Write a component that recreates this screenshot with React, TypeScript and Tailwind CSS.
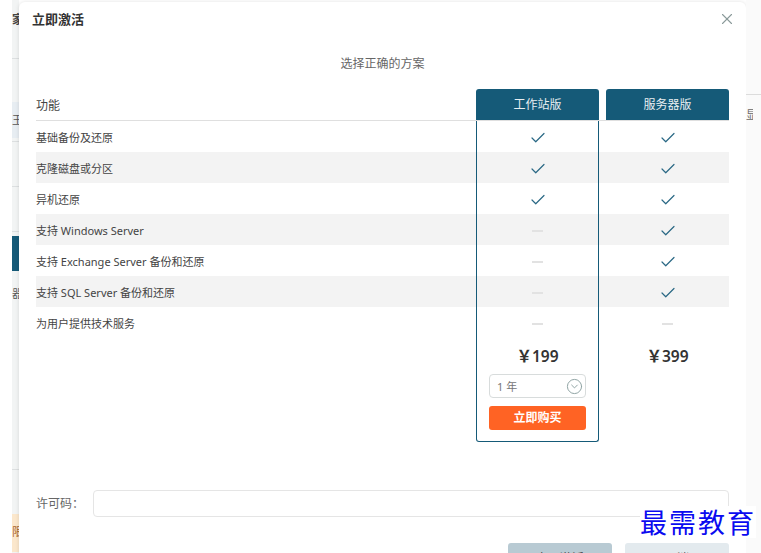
import { Check, CircleChevronDown, X } from 'lucide-react';

const features = [
  { name: '基础备份及还原', a: true, b: true },
  { name: '克隆磁盘或分区', a: true, b: true },
  { name: '异机还原', a: true, b: true },
  { name: '支持 Windows Server', a: false, b: true },
  { name: '支持 Exchange Server 备份和还原', a: false, b: true },
  { name: '支持 SQL Server 备份和还原', a: false, b: true },
  { name: '为用户提供技术服务', a: false, b: false },
];

function Mark({ on }: { on: boolean }) {
  if (on) return <Check size={18} strokeWidth={1.6} className="text-[#2a6885]" />;
  return <div className="h-[2px] w-[11px] bg-[#e2e2e2]" />;
}

export default function App() {
  return (
    <div
      className="relative flex h-[553px] w-[761px] overflow-hidden bg-white text-[#333]"
      style={{ fontFamily: '"Noto Sans", "Noto Sans CJK SC", sans-serif' }}
    >
      {/* page behind the dialog, left side */}
      <div className="w-3 shrink-0 bg-white" />
      <div className="flex h-full w-[7px] shrink-0 flex-col overflow-hidden bg-[#f2f4f4] text-[11px] leading-none">
        <div className="h-[59px] whitespace-nowrap border-b border-[#dcdfe0] pt-3 text-xs font-bold text-[#444]">家</div>
        <div className="mt-[43px] h-[36px] whitespace-nowrap bg-[#e7edf2] pt-3 text-[#555]">王</div>
        <div className="mt-[3px] h-px bg-[#dcdfe0]" />
        <div className="mt-[44px] h-px bg-[#dcdfe0]" />
        <div className="mt-[44px] h-px bg-[#dcdfe0]" />
        <div className="mt-1 h-[35px] bg-[#155a78]" />
        <div className="mt-[17px] whitespace-nowrap text-[#555]">器</div>
        <div className="mt-[170px] h-px bg-[#dcdfe0]" />
        <div className="mt-[44px] h-[38px] whitespace-nowrap bg-[#fbe7cc] pt-3 text-[#a8652a]">限</div>
      </div>

      {/* dialog */}
      <div className="mt-0.5 flex h-[600px] w-[727px] shrink-0 flex-col rounded-t-md bg-white pl-[17px] pr-[17px] shadow-[0_0_4px_rgba(0,0,0,0.12)]">
        <div className="flex h-[34px] items-center justify-between">
          <div className="-ml-1 text-[13px] font-bold leading-none text-[#333]">立即激活</div>
          <X size={18} strokeWidth={1.5} className="-mr-[7px] text-[#8b9a9a]" />
        </div>
        <div className="mt-[21px] text-center text-xs leading-[14px] text-[#666]">选择正确的方案</div>

        <div className="mt-[18px] flex h-[32px] gap-[7px] border-b border-[#dfdfdf]">
          <div className="flex flex-1 items-center pt-0.5 text-xs leading-none text-[#444]">功能</div>
          <div className="flex h-[31px] w-[123px] items-center justify-center rounded-t-[3px] bg-[#155a78] text-xs leading-none text-[#e8eef1]">工作站版</div>
          <div className="flex h-[31px] w-[123px] items-center justify-center rounded-t-[3px] bg-[#155a78] text-xs leading-none text-[#e8eef1]">服务器版</div>
        </div>

        {features.map((f, i) => (
          <div key={f.name} className={`flex h-[31px] gap-[7px] ${i % 2 === 1 ? 'bg-[#f3f3f3]' : ''}`}>
            <div className="flex flex-1 items-center pt-0.5 text-[11px] leading-none text-[#444]">{f.name}</div>
            <div className="flex w-[123px] items-center justify-center border-x border-[#155a78] pt-0.5">
              <Mark on={f.a} />
            </div>
            <div className="flex w-[123px] items-center justify-center pt-0.5">
              <Mark on={f.b} />
            </div>
          </div>
        ))}

        <div className="flex gap-[7px]">
          <div className="flex-1" />
          <div className="flex h-[104px] w-[123px] flex-col items-center rounded-b-[3px] border-x border-b border-[#155a78] px-3">
            <div className="mt-[7px] text-[15.5px] font-semibold leading-[22px] text-[#333]">￥199</div>
            <div className="mt-[7px] flex h-[24px] w-[97px] items-center justify-between rounded-[4px] border border-[#d8dcdc] pl-[7px] pr-[2px] text-[11px] leading-none text-[#777]">
              <span>1 年</span>
              <CircleChevronDown size={17} strokeWidth={1.4} className="text-[#8fa3a3]" />
            </div>
            <button className="mt-2 h-[24px] w-[97px] rounded-[3px] bg-[#ff6324] text-xs font-bold leading-none text-white">立即购买</button>
          </div>
          <div className="flex w-[123px] justify-center">
            <div className="mt-[7px] text-[15.5px] font-semibold leading-[22px] text-[#333]">￥399</div>
          </div>
        </div>

        <div className="mt-[48px] flex items-center">
          <div className="w-[57px] text-xs leading-none text-[#666]">许可码：</div>
          <div className="h-[27px] flex-1 rounded-[4px] border border-[#e5e5e5] bg-white" />
        </div>

        <div className="mt-[26px] flex justify-end gap-[13px]">
          <button className="h-[31px] w-[104px] rounded-[3px] bg-[#b8cad3] text-xs leading-none text-[#333]">立即激活</button>
          <button className="h-[31px] w-[104px] rounded-[3px] bg-[#e3eaee] text-xs leading-none text-[#555]">取消</button>
        </div>
      </div>

      {/* page behind the dialog, right side */}
      <div className="flex h-full flex-1 flex-col overflow-hidden bg-[#fafafa] text-[11px] leading-none">
        <div className="mt-[94px] h-px bg-[#dcdcdc]" />
        <div className="mt-[14px] w-[7px] overflow-hidden whitespace-nowrap text-[#666]">显</div>
      </div>

      {/* watermark */}
      <div
        className="absolute left-[640px] top-[506px] whitespace-nowrap bg-white text-[27px] leading-[32px] tracking-[2px] text-[#0a0af0]"
        style={{ fontFamily: '"Noto Sans CJK SC", sans-serif' }}
      >
        最需教育
      </div>
    </div>
  );
}
